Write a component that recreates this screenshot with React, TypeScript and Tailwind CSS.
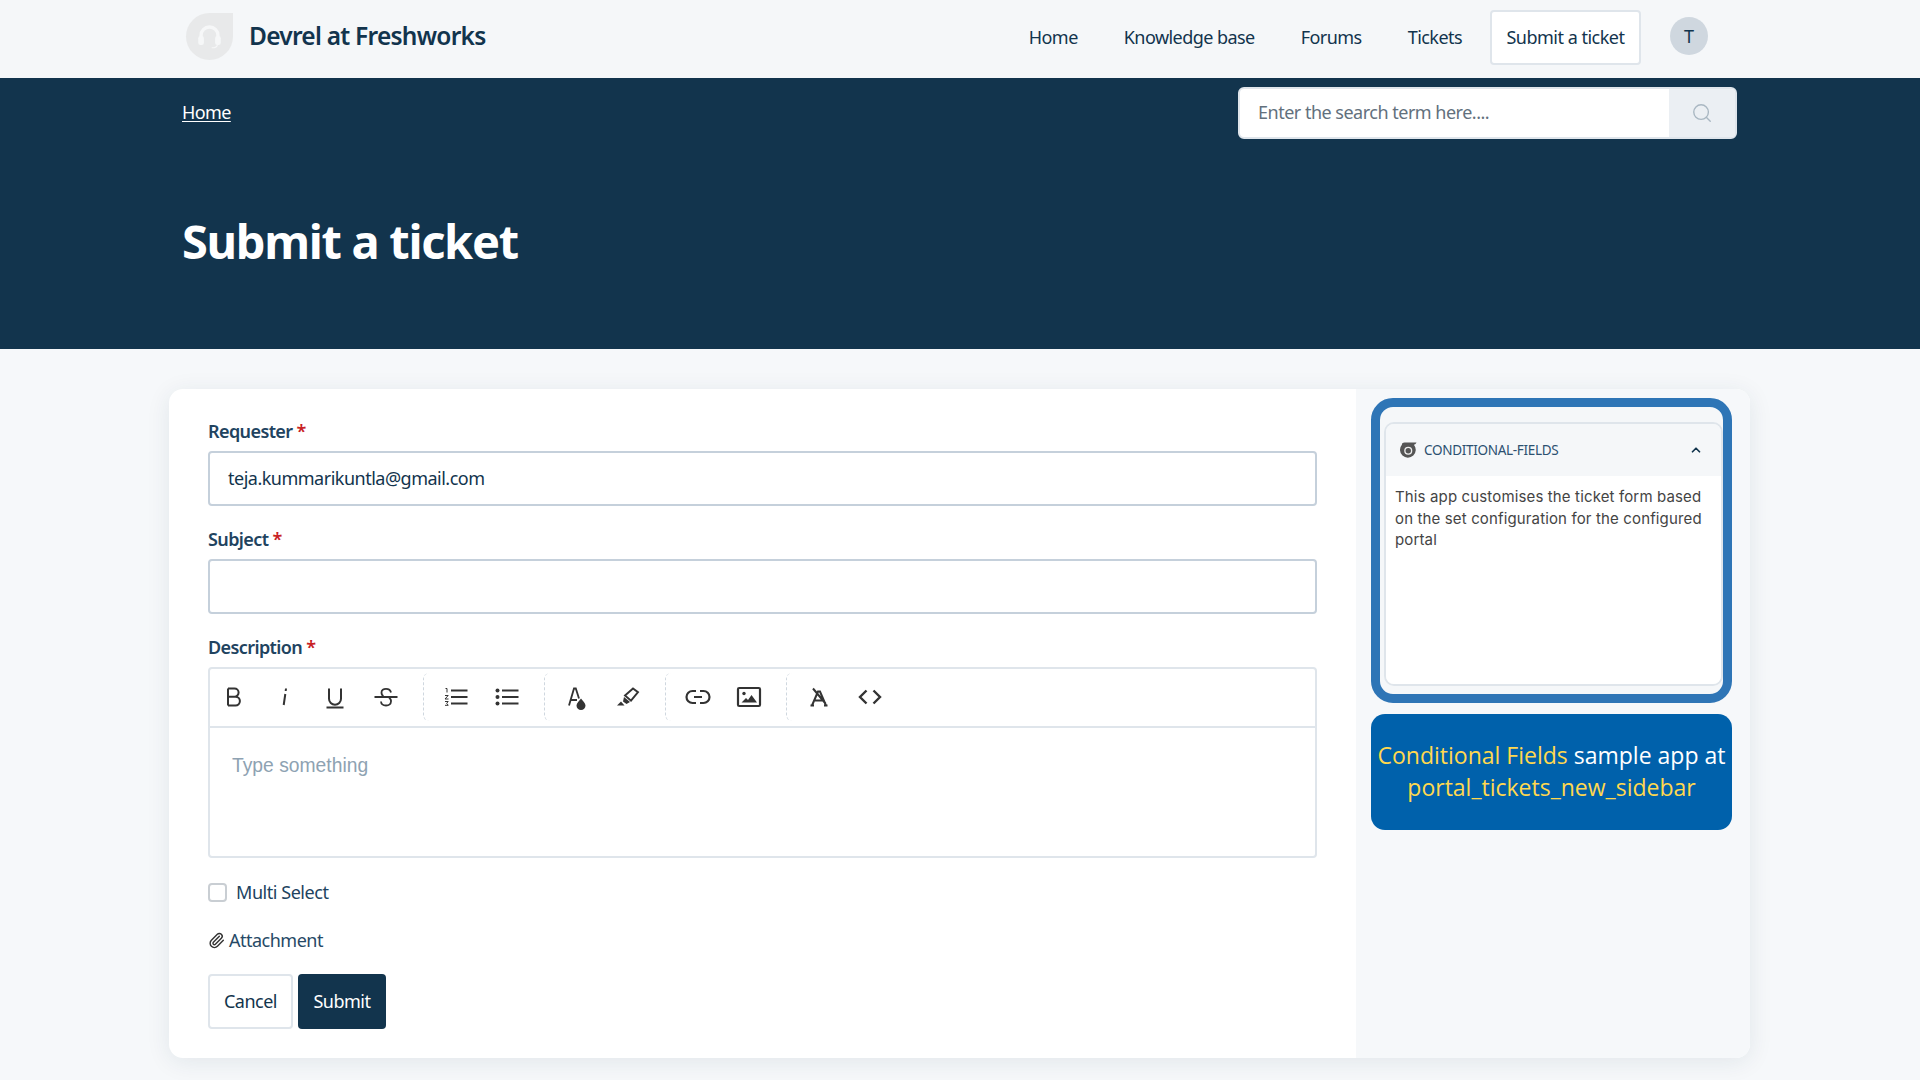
import { ChevronUp, Paperclip, Search } from 'lucide-react'

function ToolIcon({ children }: { children: React.ReactNode }) {
  return (
    <svg viewBox="0 0 24 24" className="w-6 h-6 text-[#333] overflow-visible" fill="none" stroke="currentColor" strokeWidth="2">
      {children}
    </svg>
  )
}

const Divider = () => <div className="h-[48px] w-[8px] ml-[25.5px] mr-[13px] border-l border-dashed border-[#cfd7df] rounded-l-md" />

function Toolbar() {
  return (
    <div className="h-[59px] pb-[2px] border-b-2 border-[#dfe5eb] flex items-center pl-[12px] shrink-0">
      <div className="flex gap-[26.5px]">
        <ToolIcon><path d="M6 3.500v17M6 3.500h6.500a4 4 0 0 1 0 8.200H6M12.500 11.700h1a4.400 4.400 0 0 1 0 8.800H6" /></ToolIcon>
        <ToolIcon><path d="M12.300 9 10.700 20M13 3.500l-.3 2.500" strokeWidth="2" /></ToolIcon>
        <ToolIcon><path d="M6 3.500v10.300a6 6 0 0 0 12 0V3.500M3.500 22.500h17" /></ToolIcon>
        <ToolIcon><path d="M17 7.500C16.500 5 14.500 3.800 12 3.800S7.500 5.300 7.500 7.500c0 1.500.7 3 2 3.500M15 13c1.500.800 2.200 2 2 3.500-.2 2.500-2.500 4-5 4s-4.800-1.500-5-4M.5 12h23" strokeWidth="1.800" /></ToolIcon>
      </div>
      <Divider />
      <div className="flex gap-[26.5px]">
        <ToolIcon>
          <path d="M7 5.500h16.500M7 12h16.500M7 18.500h16.500" strokeWidth="2.200" />
          <path d="M1.500 3.500h1.500v4M1 10.500h3.200L1 14h3.500M1 16.500h3.200l-1.500 1.800 1.500 2H1" strokeWidth="1" />
        </ToolIcon>
        <ToolIcon>
          <path d="M7 5.500h16.500M7 12h16.500M7 18.500h16.500" strokeWidth="2.200" />
          <circle cx="2.500" cy="5.500" r="2" fill="currentColor" stroke="none" />
          <circle cx="2.500" cy="12" r="2" fill="currentColor" stroke="none" />
          <circle cx="2.500" cy="18.500" r="2" fill="currentColor" stroke="none" />
        </ToolIcon>
      </div>
      <Divider />
      <div className="flex gap-[26.5px]">
        <ToolIcon>
          <path d="m4 20.500 5-17h1.800l3.200 10M6 15h6" strokeWidth="1.800" />
          <path d="M16 13.500c-1.700 2.500-4.500 4.500-4.500 7a4.500 4.500 0 0 0 9 0c0-2.500-2.800-4.500-4.500-7Z" fill="currentColor" stroke="none" />
        </ToolIcon>
        <ToolIcon>
          <path d="M9 10.500 17 3.500l5 3.700-7 8.500-6-5.200Z" strokeWidth="1.900" />
          <path d="M8 12l6 5-3.500 2-3.500-2.500ZM1 20.500l4-4 3.500 4H1Z" fill="currentColor" stroke="none" />
        </ToolIcon>
      </div>
      <Divider />
      <div className="flex gap-[26.5px]">
        <ToolIcon>
          <path d="M10 6H6.500a6 6 0 0 0 0 12H10M14 6h3.500a6 6 0 0 1 0 12H14M8 12h8" strokeWidth="2.200" />
        </ToolIcon>
        <ToolIcon>
          <rect x="1" y="3" width="22" height="18" rx="1.200" strokeWidth="2.200" />
          <circle cx="7" cy="8.500" r="1.700" fill="currentColor" stroke="none" />
          <path d="m4.500 17.500 4.500-4.500 2 2 3.500-5 5.500 7.500h-15.500Z" fill="currentColor" stroke="none" />
        </ToolIcon>
      </div>
      <Divider />
      <div className="flex gap-[26.5px]">
        <ToolIcon>
          <path d="m5 20.500 6-14h2l6 14M8 15.500h8M6 3.500 18.500 18.500M3.500 20.500H7M17 20.500h3.500" strokeWidth="2" />
        </ToolIcon>
        <ToolIcon>
          <path d="M8.500 5.500 2 12l6.500 6.500M15.500 5.500 22 12l-6.500 6.500" strokeWidth="2.400" />
        </ToolIcon>
      </div>
    </div>
  )
}

function Required({ label }: { label: string }) {
  return (
    <label className="block h-[24px] leading-[24px] text-[18px] font-semibold text-[#21435f] tracking-[-0.6px] mb-[8px]">
      {label} <span className="text-[#c82124]">*</span>
    </label>
  )
}

export default function App() {
  return (
    <div className="h-screen overflow-hidden bg-[#f6f8fa] text-[#12344d] font-['Noto_Sans',sans-serif]">
      {/* Header */}
      <header className="h-[78px] bg-[#f5f7f9] flex items-center pl-[186px] pr-[212px]">
        <div className="w-[47px] h-[47px] mb-[5px] rounded-full rounded-tr-[4px] bg-[#e8e9ea] flex items-center justify-center">
          <svg viewBox="0 0 24 24" className="w-[27px] h-[27px]" fill="none" stroke="#f6f7f8" strokeWidth="3">
            <path d="M4.500 14v-3a7.500 7.500 0 0 1 15 0v3" />
            <rect x="2" y="11.500" width="5" height="8" rx="2" fill="#f6f7f8" stroke="none" />
            <rect x="17" y="11.500" width="5" height="8" rx="2" fill="#f6f7f8" stroke="none" />
            <path d="M19 19c0 2-2 3-5 3" strokeWidth="1" />
          </svg>
        </div>
        <div className="ml-[16px] mb-[6px] text-[24.5px] font-semibold tracking-[-0.75px] text-[#12344d]">Devrel at Freshworks</div>
        <nav className="ml-auto flex items-center gap-[46px] text-[18px] tracking-[-0.55px] text-[#12344d]">
          <a className="mb-[4px]">Home</a>
          <a className="mb-[4px]">Knowledge base</a>
          <a className="mb-[4px]">Forums</a>
          <a className="mb-[4px]">Tickets</a>
        </nav>
        <a className="ml-[28px] mb-[4px] h-[55px] w-[151px] flex items-center justify-center bg-white border-2 border-[#dfe5eb] rounded-[4px] text-[18px] tracking-[-0.5px]">Submit a ticket</a>
        <div className="ml-[29px] mb-[6px] w-[38px] h-[38px] rounded-full bg-[#cfd7df] flex items-center justify-center text-[18px]">T</div>
      </header>

      {/* Hero */}
      <section className="h-[271px] bg-[#12344d] pl-[182px] pr-[183px] pt-[9px]">
        <div className="flex items-center justify-between">
          <a className="mb-[2px] text-[18px] text-white underline underline-offset-2 tracking-[-0.6px]">Home</a>
          <div className="w-[499px] h-[52px] flex bg-white border-2 border-[#dfe5eb] rounded-[6px] overflow-hidden">
            <div className="flex-1 flex items-center pl-[18px] pb-[2px] text-[18px] text-[#62707d] tracking-[-0.5px]">Enter the search term here....</div>
            <div className="w-[66px] bg-[#ebeff3] flex items-center justify-center">
              <Search className="w-[22px] h-[22px] text-[#a9b7c2]" strokeWidth={1.5} />
            </div>
          </div>
        </div>
        <h1 className="mt-[70px] text-[47px] leading-[64px] font-bold text-white tracking-[-1.3px]">Submit a ticket</h1>
      </section>

      {/* Card */}
      <main className="pl-[169px] pt-[40px]">
        <div className="w-[1581px] h-[669px] flex bg-white rounded-[14px] overflow-hidden shadow-[0_4px_24px_rgba(18,52,77,0.09)]">
          <form className="w-[1187px] px-[39px] pt-[30px]">
            <Required label="Requester" />
            <div className="h-[55px] mb-[21px] flex items-center px-[18px] border-2 border-[#c5d0db] rounded-[4px] text-[18px] tracking-[-0.5px]">teja.kummarikuntla@gmail.com</div>
            <Required label="Subject" />
            <div className="h-[55px] mb-[21px] border-2 border-[#c5d0db] rounded-[4px]" />
            <Required label="Description" />
            <div className="h-[191px] border-2 border-[#dfe5eb] rounded-[4px] flex flex-col">
              <Toolbar />
              <div className="pl-[22px] pt-[25px] text-[19.3px] leading-[26px] text-[#8ea2b2] font-['Liberation_Sans',sans-serif]">Type something</div>
            </div>
            <div className="mt-[24px] flex items-center gap-[9px] h-[20px]">
              <span className="w-[19px] h-[19px] bg-white border-2 border-[#c9ced3] rounded-[4px]" />
              <span className="text-[18px] tracking-[-0.45px] text-[#21435f]">Multi Select</span>
            </div>
            <div className="mt-[26px] flex items-center h-[24px] text-[18px] tracking-[-0.5px] text-[#264966]">
              <Paperclip className="w-[17px] h-[17px] text-[#333] mr-[4px]" strokeWidth={2} />
              Attachment
            </div>
            <div className="mt-[22px] flex gap-[5px]">
              <button type="button" className="w-[85px] h-[55px] bg-white border-2 border-[#dfe5eb] rounded-[4px] text-[18px] tracking-[-0.5px]">Cancel</button>
              <button type="button" className="w-[88px] h-[55px] bg-[#12344d] rounded-[4px] text-white text-[18px] tracking-[-0.5px]">Submit</button>
            </div>
          </form>
          <aside className="w-[394px] bg-[#f6f8fa] pl-[15px] pt-[9px]">
            <div className="w-[361px] h-[305px] border-[9px] border-[#2e75b6] rounded-[22px] pl-[4px] pt-[15px] pb-[8px] bg-[#f5f7f9]">
              <div className="w-[339px] h-full border-2 border-[#dfe5eb] rounded-[10px] overflow-hidden flex flex-col">
                <div className="h-[52px] flex items-center pl-[14px] pr-[18px] bg-[#f5f7f9] shrink-0">
                  <svg viewBox="0 0 24 24" className="w-[18px] h-[18px]">
                    <path d="M2.500 5c0-2 1.500-3 3.500-3h16c-.5 1.500-2 2.500-3.500 3a10.500 10.500 0 1 1-16 0Z" fill="#555" />
                    <circle cx="11" cy="13" r="4.500" fill="none" stroke="#eee" strokeWidth="1.800" />
                  </svg>
                  <span className="ml-[6px] text-[13.5px] tracking-[-0.3px] text-[#2c5070]">CONDITIONAL-FIELDS</span>
                  <ChevronUp className="ml-auto w-[14px] h-[14px] text-[#12344d]" strokeWidth={3} />
                </div>
                <div className="flex-1 bg-white px-[9px] pt-[10px] text-[15px] leading-[21.6px] tracking-[0.14px] text-[#444] font-['Inter',sans-serif]">
                  This app customises the ticket form based on the set configuration for the configured portal
                </div>
              </div>
            </div>
            <div className="mt-[11px] w-[361px] h-[116px] pb-[3px] bg-[#0061ab] rounded-[14px] flex items-center justify-center text-center text-[23px] leading-[32px] text-[#ffd84f] font-['Open_Sans',sans-serif] whitespace-nowrap">
              <p>Conditional Fields <span className="text-white">sample app at</span><br />portal_tickets_new_sidebar</p>
            </div>
          </aside>
        </div>
      </main>
    </div>
  )
}
